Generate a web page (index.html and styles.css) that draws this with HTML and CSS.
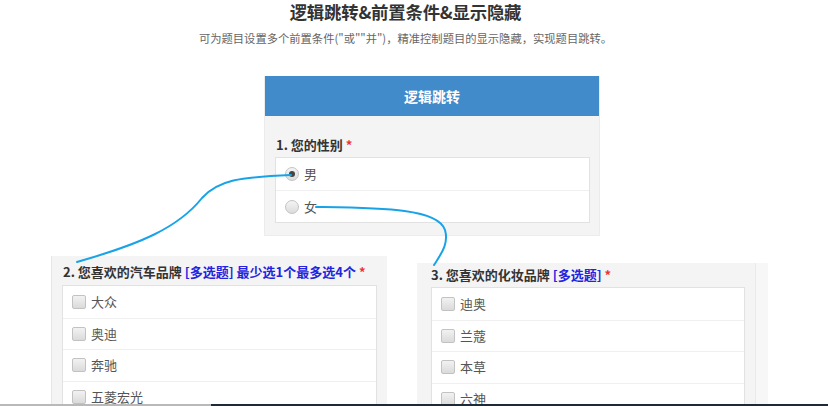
FILE: index.html
```html
<!DOCTYPE html>
<html lang="zh-CN">
<head>
<meta charset="utf-8">
<title>逻辑跳转</title>
<link rel="stylesheet" href="styles.css">
</head>
<body>
<div class="page">
  <header class="hero">
    <h1 class="hero-title">逻辑跳转&amp;前置条件&amp;显示隐藏</h1>
    <p class="hero-sub">可为题目设置多个前置条件("或""并")，精准控制题目的显示隐藏，实现题目跳转。</p>
  </header>

  <section class="card card-main">
    <div class="card-head">逻辑跳转</div>
    <div class="card-body">
      <div class="q-title">1. 您的性别 <span class="req">*</span></div>
      <div class="opts">
        <div class="opt"><span class="radio checked"></span><span class="opt-text">男</span></div>
        <div class="opt"><span class="radio"></span><span class="opt-text">女</span></div>
      </div>
    </div>
  </section>

  <div class="row">
    <section class="card card-left">
      <div class="q-title">2. 您喜欢的汽车品牌 <span class="tag">[多选题] 最少选1个最多选4个</span> <span class="req">*</span></div>
      <div class="opts opts-multi">
        <div class="opt"><span class="check"></span><span class="opt-text">大众</span></div>
        <div class="opt"><span class="check"></span><span class="opt-text">奥迪</span></div>
        <div class="opt"><span class="check"></span><span class="opt-text">奔驰</span></div>
        <div class="opt"><span class="check"></span><span class="opt-text">五菱宏光</span></div>
      </div>
    </section>
    <section class="card card-right">
      <div class="q-title">3. 您喜欢的化妆品牌 <span class="tag">[多选题]</span> <span class="req">*</span></div>
      <div class="opts opts-multi">
        <div class="opt"><span class="check"></span><span class="opt-text">迪奥</span></div>
        <div class="opt"><span class="check"></span><span class="opt-text">兰蔻</span></div>
        <div class="opt"><span class="check"></span><span class="opt-text">本草</span></div>
        <div class="opt"><span class="check"></span><span class="opt-text">六神</span></div>
      </div>
    </section>
  </div>

  <svg class="links" width="828" height="406" viewBox="0 0 828 406" aria-hidden="true">
    <path d="M291 175 C 240 177, 218 180, 202 198 C 178 228, 140 244, 77 262" />
    <path d="M316 207 C 380 208, 438 208, 445 230 C 449 244, 441 254, 434 265" />
  </svg>
  <div class="edge"><span class="edge-light"></span><span class="edge-dark"></span></div>
</div>
</body>
</html>
```

FILE: styles.css
```css
* { box-sizing: border-box; }
html, body {
  margin: 0;
  padding: 0;
  background: #ffffff;
}
body {
  width: 828px;
  height: 406px;
  overflow: hidden;
  font-family: "Noto Sans CJK SC", "Open Sans", "Liberation Sans", sans-serif;
  color: #333;
}
.page {
  position: relative;
  width: 828px;
  height: 406px;
  overflow: hidden;
}
.hero {
  width: 811px;
  text-align: center;
  padding-top: 1px;
}
.hero-title {
  margin: 0;
  font-size: 17.4px;
  line-height: 21px;
  font-weight: 700;
  color: #333;
  letter-spacing: -0.2px;
}
.hero-sub {
  margin: 8px 0 0;
  font-size: 11.3px;
  line-height: 16px;
  color: #666;
}
.card {
  background: #f4f4f4;
}
.card-main {
  width: 336px;
  margin: 30px 0 0 264px;
  border: 1px solid #ececec;
  border-top: 0;
}
.card-head {
  height: 40px;
  background: #428bca;
  color: #fff;
  font-size: 14px;
  font-weight: 700;
  line-height: 40px;
  text-align: center;
}
.card-body {
  padding: 20px 9px 12px 10px;
}
.q-title {
  font-size: 13px;
  line-height: 18px;
  font-weight: 700;
  color: #333;
  white-space: nowrap;
}
.card-body .q-title { margin: 0 0 3px 1px; }
.req { color: #e33; font-weight: 700; }
.tag { color: #2323e0; }
.opts {
  background: #fff;
  border: 1px solid #e2e2e2;
}
.opt {
  height: 32px;
  display: flex;
  align-items: center;
  padding-left: 9px;
  border-top: 1px solid #efefef;
}
.opt:first-child { border-top: 0; }
.opts-multi .opt { height: 31.6px; }
.opt-text {
  font-size: 13px;
  line-height: 18px;
  color: #555;
  margin-left: 5px;
}
.radio {
  width: 14px;
  height: 14px;
  border-radius: 50%;
  border: 1px solid #c4c4c4;
  background: linear-gradient(#f4f4f4, #dcdcdc);
  display: inline-flex;
  align-items: center;
  justify-content: center;
}
.radio.checked::after {
  content: "";
  width: 6px;
  height: 6px;
  border-radius: 50%;
  background: #444;
}
.check {
  width: 14px;
  height: 14px;
  border-radius: 2px;
  border: 1px solid #c2c2c2;
  background: linear-gradient(#f2f2f2, #dadada);
}
.row {
  display: flex;
  align-items: flex-start;
  margin-top: 20px;
  padding-left: 51px;
}
.card-left {
  width: 336px;
  padding: 7px 10px 0 10px;
  border-left: 1px solid #e6e6e6;
}
.card-left .q-title { margin-bottom: 4px; margin-left: 1px; }
.card-right {
  width: 339px;
  margin-left: 30px;
  margin-top: 7px;
  padding: 3px 10px 0 14px;
  border-right: 1px solid #e9e9e9;
  box-shadow: 12px 0 0 #f7f7f7;
}
.card-right .q-title { margin-bottom: 3px; }
.links {
  position: absolute;
  left: 0;
  top: 0;
  pointer-events: none;
}
.links path {
  fill: none;
  stroke: #18a3e8;
  stroke-width: 2;
  stroke-linecap: round;
}
.edge {
  position: absolute;
  left: 0;
  bottom: 0;
  width: 828px;
  height: 2px;
  display: flex;
}
.edge-light {
  width: 211px;
  background: #b9b9b9;
}
.edge-dark {
  flex: 1;
  background: #1f2a36;
}
```
